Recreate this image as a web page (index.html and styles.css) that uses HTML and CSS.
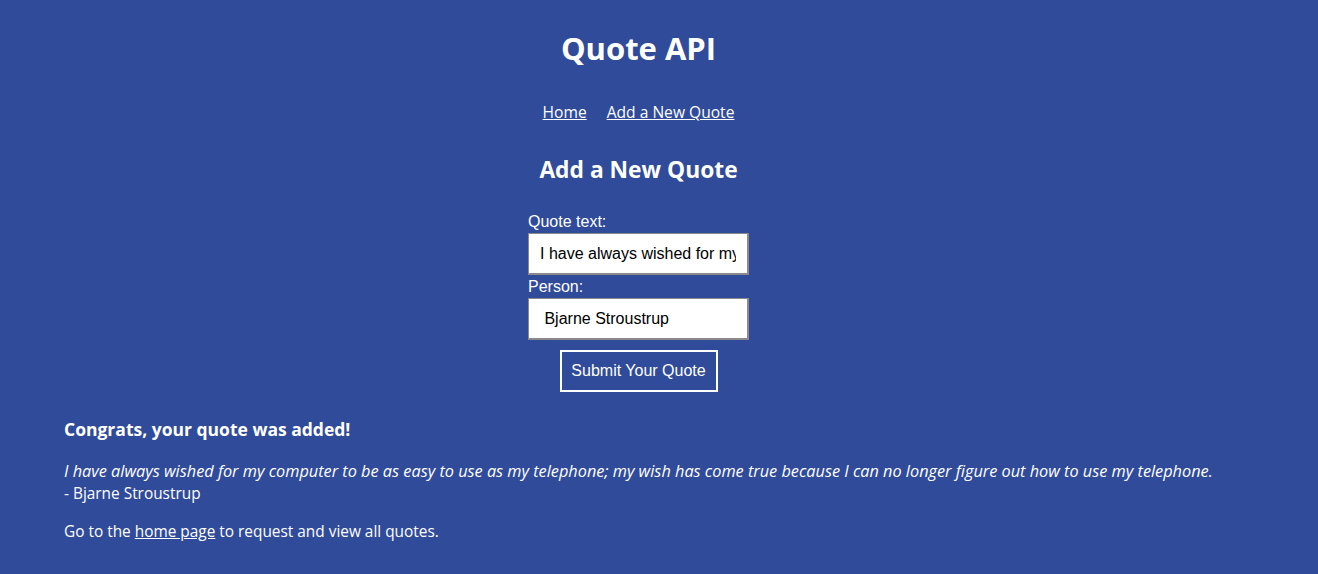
FILE: index.html
```html
<!DOCTYPE html>
<html lang="en">
<head>
<meta charset="utf-8">
<title>Quote API</title>
<link rel="stylesheet" href="styles.css">
</head>
<body>
<div class="page">
<header class="header">
  <h1 class="title">Quote API</h1>
  <nav class="nav">
    <a href="#" class="nav-link">Home</a>
    <a href="#" class="nav-link">Add a New Quote</a>
  </nav>
</header>
<main class="main">
  <h2 class="subtitle">Add a New Quote</h2>
  <form class="form">
    <label class="label" for="quote">Quote text:</label>
    <input class="input input-first" id="quote" type="text" value="I have always wished for my computer to be as easy to use as my telephone">
    <label class="label" for="person">Person:</label>
    <input class="input" id="person" type="text" value=" Bjarne Stroustrup">
    <button class="button" type="button">Submit Your Quote</button>
  </form>
  <section class="result">
    <h3 class="result-title">Congrats, your quote was added!</h3>
    <p class="quote"><em class="quote-text">I have always wished for my computer to be as easy to use as my telephone; my wish has come true because I can no longer figure out how to use my telephone.</em><br>- Bjarne Stroustrup</p>
    <p class="home">Go to the <a href="#" class="link">home page</a> to request and view all quotes.</p>
  </section>
</main>
</div>
</body>
</html>
```
FILE: styles.css
```css
html, body {
  margin: 0;
  padding: 0;
}
body {
  background: #2f4b9a;
  color: #ffffff;
  font-family: "Open Sans", "Noto Sans", sans-serif;
  font-size: 15.4px;
  height: 574px;
}
.page {
  width: 1277px;
}
.header {
  display: flex;
  flex-direction: column;
  align-items: center;
  padding-top: 28px;
}
.title {
  margin: 0;
  font-size: 31px;
  font-weight: 700;
  line-height: 40px;
}
.nav {
  display: flex;
  gap: 20px;
  margin-top: 34px;
  line-height: 20px;
  font-size: 15.6px;
}
.nav-link, .link {
  color: #ffffff;
}
.main {
  padding: 0 64px;
}
.subtitle {
  text-align: center;
  margin: 33px 0 0;
  font-size: 22.8px;
  line-height: 30px;
  font-weight: 700;
}
.form {
  display: flex;
  flex-direction: column;
  align-items: center;
  margin-top: 26px;
}
.label {
  width: 221px;
  line-height: 22px;
  font-family: "Liberation Sans", Arial, sans-serif;
  font-size: 16px;
}
.input {
  box-sizing: border-box;
  width: 221px;
  height: 42px;
  border: 1px solid #8a8a8a;
  border-right-width: 2px;
  border-bottom-width: 2px;
  background: #ffffff;
  color: #000000;
  font-family: "Liberation Sans", Arial, sans-serif;
  font-size: 16px;
  padding: 0 11px;
  margin: 0;
}
.input-first {
  margin-bottom: 1px;
}
.button {
  box-sizing: border-box;
  margin-top: 10px;
  height: 42px;
  width: 158px;
  background: transparent;
  border: 2px solid #ffffff;
  color: #ffffff;
  font-family: "Liberation Sans", Arial, sans-serif;
  font-size: 16px;
}
.result {
  margin-top: 25px;
}
.result-title {
  margin: 0;
  font-size: 17.5px;
  line-height: 24px;
  font-weight: 700;
}
.quote {
  margin: 19px 0 0;
  line-height: 22px;
}
.quote-text {
  font-size: 16.3px;
}
.home {
  margin: 16px 0 0;
  line-height: 22px;
}
```
